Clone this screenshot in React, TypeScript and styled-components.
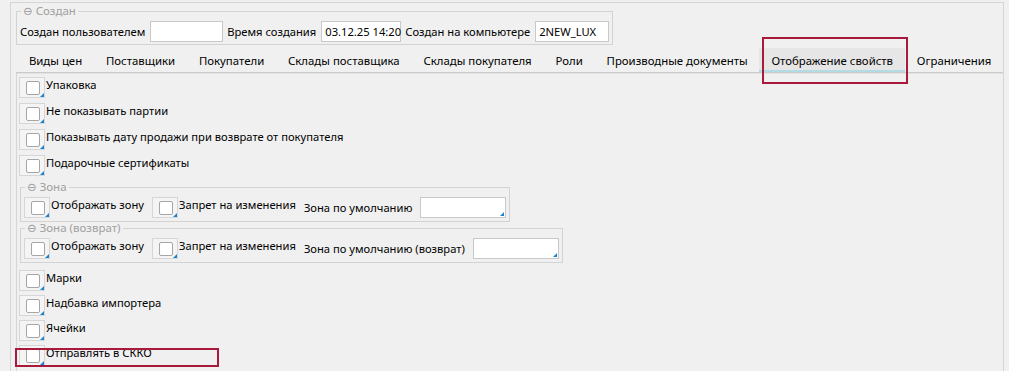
import React, { FC } from 'react';
import styled, { createGlobalStyle } from 'styled-components';

const GlobalStyle = createGlobalStyle`
  html, body {
    margin: 0;
    padding: 0;
    background: #f0f0f0;
  }
  body {
    font-family: 'Noto Sans', 'DejaVu Sans', sans-serif;
    font-size: 11.2px;
    color: #000;
  }
`;

const tabs = [
  'Виды цен',
  'Поставщики',
  'Покупатели',
  'Склады поставщика',
  'Склады покупателя',
  'Роли',
  'Производные документы',
  'Отображение свойств',
  'Ограничения',
];

const topOptions = [
  'Упаковка',
  'Не показывать партии',
  'Показывать дату продажи при возврате от покупателя',
  'Подарочные сертификаты',
];

const bottomOptions = ['Марки', 'Надбавка импортера', 'Ячейки', 'Отправлять в СККО'];

const CheckItem: FC<{ label: string }> = ({ label }) => (
  <CheckRow>
    <CheckFrame>
      <CheckMark />
    </CheckFrame>
    <CheckLabel>{label}</CheckLabel>
  </CheckRow>
);

const ZoneGroup: FC<{ title: string; defaultLabel: string }> = ({ title, defaultLabel }) => (
  <Group $inner>
    <Legend>⊖ {title}</Legend>
    <ZoneRow>
      <CheckItem label="Отображать зону" />
      <CheckItem label="Запрет на изменения" />
      <Label>{defaultLabel}</Label>
      <TextBox $w={86} $lookup />
    </ZoneRow>
  </Group>
);

const App: FC = () => {
  return (
    <Screen>
      <GlobalStyle />
      <Frame>
        <Group>
          <Legend>⊖ Создан</Legend>
          <FieldRow>
            <Label>Создан пользователем</Label>
            <TextBox $w={73} />
            <Label>Время создания</Label>
            <TextBox $w={80}>03.12.25 14:20</TextBox>
            <Label>Создан на компьютере</Label>
            <TextBox $w={74}>2NEW_LUX</TextBox>
          </FieldRow>
        </Group>
        <TabBar>
          {tabs.map((t) => (
            <Tab key={t} $active={t === 'Отображение свойств'}>
              {t}
            </Tab>
          ))}
        </TabBar>
        <TabPage>
          <OptionList $gap={5}>
            {topOptions.map((o) => (
              <CheckItem key={o} label={o} />
            ))}
          </OptionList>
          <ZoneGroup title="Зона" defaultLabel="Зона по умолчанию" />
          <ZoneGroup title="Зона (возврат)" defaultLabel="Зона по умолчанию (возврат)" />
          <OptionList $gap={4} $top={7}>
            {bottomOptions.map((o) => (
              <CheckItem key={o} label={o} />
            ))}
          </OptionList>
        </TabPage>
      </Frame>
      <Highlight $left={762} $top={37} $w={146} $h={47} />
      <Highlight $left={15} $top={348} $w={204} $h={19} />
    </Screen>
  );
};

export default App;

const Screen = styled.div`
  position: relative;
  width: 1009px;
  height: 371px;
  overflow: hidden;
  background: #f0f0f0;
`;

const Frame = styled.div`
  box-sizing: border-box;
  margin: 2px 0 0 10px;
  width: 994px;
  height: 369px;
  border: 1px solid #d5d5d5;
  border-bottom: none;
  padding: 2px 0 0 5px;
`;

const Group = styled.fieldset<{ $inner?: boolean }>`
  box-sizing: border-box;
  width: fit-content;
  min-width: 0;
  margin: ${(p) => (p.$inner ? '0 0 0 1px' : '0')};
  padding: ${(p) => (p.$inner ? '0 3px 3px 3px' : '0 3px 2px 3px')};
  border: 1px solid #d3d3d3;
`;

const Legend = styled.legend`
  margin-left: 1px;
  padding: 0 2px;
  color: #a0a0a0;
  font-size: 11.5px;
  line-height: 12px;
`;

const FieldRow = styled.div`
  display: flex;
  align-items: center;
  gap: 4px;
  padding-top: 4px;
`;

const Label = styled.span`
  white-space: nowrap;
  line-height: 15px;
  margin-right: 1px;
`;

const TextBox = styled.div<{ $w: number; $lookup?: boolean }>`
  position: relative;
  box-sizing: border-box;
  width: ${(p) => p.$w}px;
  height: 21px;
  border: 1px solid #c9c9c9;
  background: #fff;
  padding-left: 3px;
  display: flex;
  align-items: center;
  white-space: nowrap;
  &::after {
    content: '';
    display: ${(p) => (p.$lookup ? 'block' : 'none')};
    position: absolute;
    right: 1px;
    bottom: 1px;
    border-left: 4px solid transparent;
    border-bottom: 4px solid #1b84d0;
  }
`;

const TabBar = styled.div`
  display: flex;
  margin-top: 3px;
  padding-left: 1px;
  height: 24px;
  border-bottom: 1px solid #cbcbcb;
  box-shadow: 0 1px 0 #e2e2e2;
`;

const Tab = styled.div<{ $active?: boolean }>`
  box-sizing: border-box;
  display: flex;
  align-items: center;
  padding: 3px 11.9px 0;
  font-size: 11.4px;
  white-space: nowrap;
  background: ${(p) => (p.$active ? '#e6e6e6' : 'transparent')};
  border-bottom: 2px solid ${(p) => (p.$active ? '#b3dbe3' : 'transparent')};
`;

const TabPage = styled.div`
  border-left: 1px solid #d5d5d5;
  padding: 4px 0 0 2px;
  height: 300px;
`;

const OptionList = styled.div<{ $gap: number; $top?: number }>`
  display: flex;
  flex-direction: column;
  gap: ${(p) => p.$gap}px;
  margin: ${(p) => p.$top || 0}px 0 5px;
`;

const CheckRow = styled.div`
  display: flex;
  align-items: flex-start;
`;

const CheckFrame = styled.div`
  position: relative;
  box-sizing: border-box;
  flex: none;
  width: 26px;
  height: 21px;
  border: 1px solid #d6d6d6;
  background: #f4f4f4;
  &::after {
    content: '';
    position: absolute;
    right: 0;
    bottom: 0;
    border-left: 4px solid transparent;
    border-bottom: 4px solid #1b84d0;
  }
`;

const CheckMark = styled.span`
  position: absolute;
  left: 6px;
  top: 3px;
  box-sizing: border-box;
  width: 14px;
  height: 14px;
  border: 1px solid #a6a6a6;
  border-radius: 2px;
  background: #fff;
`;

const CheckLabel = styled.span`
  margin-left: 1px;
  line-height: 15px;
  white-space: nowrap;
`;

const ZoneRow = styled.div`
  display: flex;
  align-items: center;
  gap: 8px;
  padding-top: 4px;
  & > ${Label} {
    margin-right: 0;
  }
`;

const Highlight = styled.div<{ $left: number; $top: number; $w: number; $h: number }>`
  position: absolute;
  box-sizing: border-box;
  left: ${(p) => p.$left}px;
  top: ${(p) => p.$top}px;
  width: ${(p) => p.$w}px;
  height: ${(p) => p.$h}px;
  border: 2px solid #a8193c;
  pointer-events: none;
`;
